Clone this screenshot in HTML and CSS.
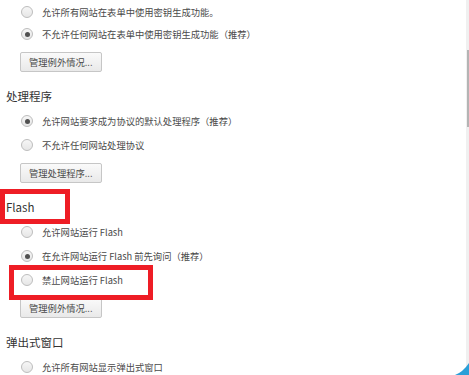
FILE: index.html
```html
<!DOCTYPE html>
<html lang="zh-CN">
<head>
<meta charset="utf-8">
<title>内容设置</title>
<link rel="stylesheet" href="styles.css">
</head>
<body>
<div class="frame">
  <main class="content">
    <section class="group first">
      <div class="opt tight"><span class="radio"></span><span class="label">允许所有网站在表单中使用密钥生成功能。</span></div>
      <div class="opt tight"><span class="radio on"></span><span class="label">不允许任何网站在表单中使用密钥生成功能（推荐）</span></div>
      <div class="btnrow"><button class="btn">管理例外情况...</button></div>
    </section>
    <section class="group">
      <h2 class="head">处理程序</h2>
      <div class="opt"><span class="radio on"></span><span class="label">允许网站要求成为协议的默认处理程序（推荐）</span></div>
      <div class="opt"><span class="radio"></span><span class="label">不允许任何网站处理协议</span></div>
      <div class="btnrow"><button class="btn">管理处理程序...</button></div>
    </section>
    <section class="group">
      <h2 class="head">Flash</h2>
      <div class="opt"><span class="radio"></span><span class="label">允许网站运行 Flash</span></div>
      <div class="opt"><span class="radio on"></span><span class="label">在允许网站运行 Flash 前先询问（推荐）</span></div>
      <div class="opt"><span class="radio"></span><span class="label">禁止网站运行 Flash</span></div>
      <div class="btnrow"><button class="btn">管理例外情况...</button></div>
    </section>
    <section class="group">
      <h2 class="head">弹出式窗口</h2>
      <div class="opt"><span class="radio"></span><span class="label">允许所有网站显示弹出式窗口</span></div>
    </section>
  </main>
  <div class="scrollbar"><div class="thumb"></div></div>
</div>
<div class="mark mark-flash"></div>
<div class="mark mark-block"></div>
<svg class="corner" width="16" height="12" viewBox="0 0 16 12"><path d="M16 0 L16 12 L2 12 Q10 9 16 0 Z" fill="#2a9fd8"/></svg>
</body>
</html>
```
FILE: styles.css
```css
html, body {
  margin: 0;
  padding: 0;
  background: #ffffff;
}
body {
  width: 469px;
  height: 375px;
  overflow: hidden;
  position: relative;
  font-family: "Noto Sans CJK SC", "Noto Sans", sans-serif;
  font-size: 9.3px;
}
.frame {
  display: flex;
  height: 375px;
}
.content {
  flex: 1;
  padding: 1px 0 0 6px;
  overflow: hidden;
}
.group {
  margin: 0 0 14px 0;
}
.head {
  margin: 0 0 3px 0;
  height: 20px;
  line-height: 20px;
  font-size: 11.5px;
  font-weight: normal;
  color: #333333;
}
.opt {
  display: flex;
  align-items: center;
  height: 24px;
  padding-left: 15px;
}
.opt.tight {
  height: 22px;
}
.radio {
  width: 10px;
  height: 10px;
  border: 1px solid #bdbdbd;
  border-radius: 50%;
  background: linear-gradient(#f6f6f6, #e6e6e6);
  display: flex;
  align-items: center;
  justify-content: center;
  margin-right: 9px;
  flex: none;
}
.radio.on::after {
  content: "";
  width: 5px;
  height: 5px;
  border-radius: 50%;
  background: #505050;
}
.label {
  font-size: 9.3px;
  color: #4a4a4a;
  line-height: 14px;
  white-space: nowrap;
}
.btnrow {
  display: flex;
  padding: 6px 0 0 14px;
}
.first .btnrow {
  padding-top: 7px;
}
.btn {
  height: 20px;
  padding: 0 8px;
  font-family: inherit;
  font-size: 9.3px;
  color: #4a4a4a;
  background: linear-gradient(#fafafa, #e9e9e9);
  border: 1px solid #c6c6c6;
  border-radius: 2px;
  line-height: 18px;
}
.scrollbar {
  width: 3px;
  background: #f0f0f0;
  flex: none;
}
.thumb {
  margin: 50px 0 0 1px;
  width: 2px;
  height: 77px;
  background: #b4b4b4;
}
.mark {
  position: absolute;
  border: 5px solid #ee1d25;
  box-sizing: border-box;
}
.mark-flash {
  left: 0;
  top: 189px;
  width: 70px;
  height: 35px;
}
.mark-block {
  left: 9px;
  top: 265px;
  width: 144px;
  height: 35px;
}
.corner {
  position: absolute;
  right: 0;
  bottom: 0;
}
```
